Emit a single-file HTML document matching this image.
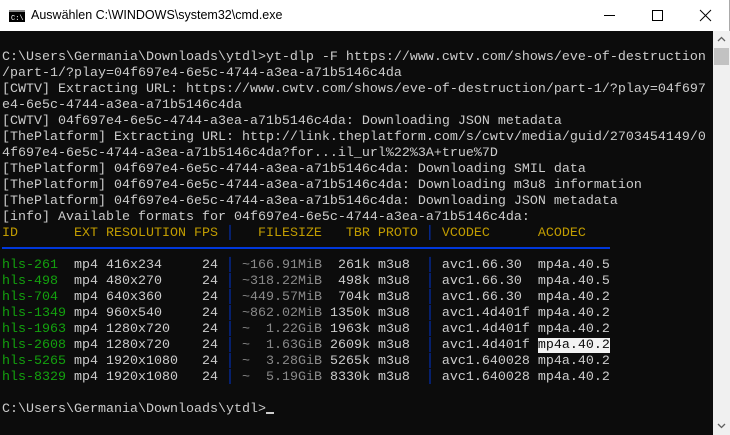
<!DOCTYPE html>
<html><head><meta charset="utf-8"><style>
*{margin:0;padding:0;box-sizing:border-box}
body{width:730px;height:435px;overflow:hidden;background:#fff;position:relative;font-family:"Liberation Sans",sans-serif}
#title{position:absolute;left:0;top:0;width:730px;height:31px;background:#fff;border-right:1px solid #aaa}
#title .t{position:absolute;left:31px;top:8px;font-size:12.5px;color:#000}
#con{position:absolute;left:0;top:31px;width:713px;height:404px;background:#0c0c0c}
pre{position:absolute;left:2px;top:19px;font-family:"Liberation Mono",monospace;font-size:13.33px;line-height:16px;color:#cccccc;white-space:pre}
.g{color:#13a10e}.y{color:#c19c00}.b{color:#0037da}.d{color:#8a8a8a}
.sel{background:#f2f2f2;color:#0c0c0c}
#rule{position:absolute;left:2px;top:216px;width:608px;height:2px;background:#0037da}
#sb{position:absolute;left:713px;top:31px;width:17px;height:404px;background:#f0f0f0}
#thumb{position:absolute;left:1px;top:17px;width:15px;height:17px;background:#c2c2c2}
#cur{position:absolute;left:266px;top:412px;width:8px;height:2px;background:#ccc}
</style></head><body>
<div id="title">
<svg style="position:absolute;left:9px;top:10px" width="16" height="12"><rect width="16" height="12" fill="#000"/><rect x="0" y="0" width="16" height="2" fill="#888"/><text x="2" y="10" font-family="Liberation Mono" font-size="7" fill="#fff">C:\</text></svg>
<div class="t">Auswählen C:\WINDOWS\system32\cmd.exe</div>
<svg style="position:absolute;left:600px;top:8px" width="120" height="16" stroke="#000" stroke-width="1" fill="none"><line x1="4" y1="7.5" x2="15" y2="7.5"/><rect x="52.5" y="2.5" width="10" height="10"/><line x1="100" y1="2" x2="111" y2="13"/><line x1="111" y1="2" x2="100" y2="13"/></svg>
</div>
<div id="con">
<pre>C:\Users\Germania\Downloads\ytdl&gt;yt-dlp -F https://www.cwtv.com/shows/eve-of-destruction
/part-1/?play=04f697e4-6e5c-4744-a3ea-a71b5146c4da
[CWTV] Extracting URL: https://www.cwtv.com/shows/eve-of-destruction/part-1/?play=04f697
e4-6e5c-4744-a3ea-a71b5146c4da
[CWTV] 04f697e4-6e5c-4744-a3ea-a71b5146c4da: Downloading JSON metadata
[ThePlatform] Extracting URL: http://link.theplatform.com/s/cwtv/media/guid/2703454149/0
4f697e4-6e5c-4744-a3ea-a71b5146c4da?for...il_url%22%3A+true%7D
[ThePlatform] 04f697e4-6e5c-4744-a3ea-a71b5146c4da: Downloading SMIL data
[ThePlatform] 04f697e4-6e5c-4744-a3ea-a71b5146c4da: Downloading m3u8 information
[ThePlatform] 04f697e4-6e5c-4744-a3ea-a71b5146c4da: Downloading JSON metadata
[info] Available formats for 04f697e4-6e5c-4744-a3ea-a71b5146c4da:
<span class="y">ID       EXT RESOLUTION FPS</span> <span class="b">│</span> <span class="y">  FILESIZE   TBR PROTO</span> <span class="b">│</span> <span class="y">VCODEC      ACODEC</span>

<span class="g">hls-261 </span> mp4 416x234     24 <span class="b">│</span> <span class="d">~166.91MiB</span>  261k m3u8  <span class="b">│</span> avc1.66.30  mp4a.40.5
<span class="g">hls-498 </span> mp4 480x270     24 <span class="b">│</span> <span class="d">~318.22MiB</span>  498k m3u8  <span class="b">│</span> avc1.66.30  mp4a.40.5
<span class="g">hls-704 </span> mp4 640x360     24 <span class="b">│</span> <span class="d">~449.57MiB</span>  704k m3u8  <span class="b">│</span> avc1.66.30  mp4a.40.2
<span class="g">hls-1349</span> mp4 960x540     24 <span class="b">│</span> <span class="d">~862.02MiB</span> 1350k m3u8  <span class="b">│</span> avc1.4d401f mp4a.40.2
<span class="g">hls-1963</span> mp4 1280x720    24 <span class="b">│</span> <span class="d">~  1.22GiB</span> 1963k m3u8  <span class="b">│</span> avc1.4d401f mp4a.40.2
<span class="g">hls-2608</span> mp4 1280x720    24 <span class="b">│</span> <span class="d">~  1.63GiB</span> 2609k m3u8  <span class="b">│</span> avc1.4d401f <span class="sel">mp4a.40.2</span>
<span class="g">hls-5265</span> mp4 1920x1080   24 <span class="b">│</span> <span class="d">~  3.28GiB</span> 5265k m3u8  <span class="b">│</span> avc1.640028 mp4a.40.2
<span class="g">hls-8329</span> mp4 1920x1080   24 <span class="b">│</span> <span class="d">~  5.19GiB</span> 8330k m3u8  <span class="b">│</span> avc1.640028 mp4a.40.2

C:\Users\Germania\Downloads\ytdl&gt;</pre>
<div id="rule"></div>
</div>
<div id="cur"></div>
<div id="sb"><div id="thumb"></div>
<svg style="position:absolute;left:4px;top:5px" width="9" height="6"><polyline points="1,5 4.5,1.5 8,5" fill="none" stroke="#606060" stroke-width="1.3"/></svg>
<svg style="position:absolute;left:4px;top:392px" width="9" height="6"><polyline points="1,1 4.5,4.5 8,1" fill="none" stroke="#606060" stroke-width="1.3"/></svg>
</div>
</body></html>
